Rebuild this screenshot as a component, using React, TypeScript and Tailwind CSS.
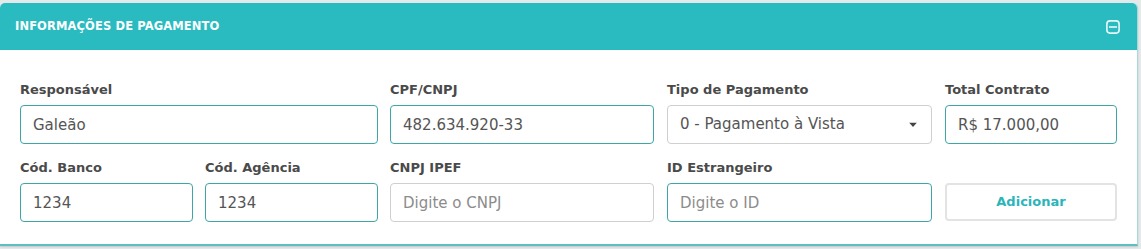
const FONT = { fontFamily: '"DejaVu Sans", "Noto Sans", sans-serif' }

function Field({ label, width, children }: { label: string; width: string; children: React.ReactNode }) {
  return (
    <div className={`flex flex-col ${width}`}>
      <label className="h-[20px] mb-[6px] flex items-center text-[13px] font-bold text-[#4a4a4a] leading-none">{label}</label>
      {children}
    </div>
  )
}

function TextInput({ value, placeholder, active }: { value?: string; placeholder?: string; active?: boolean }) {
  return (
    <input
      type="text"
      defaultValue={value}
      placeholder={placeholder}
      className={`h-[39px] w-full rounded-[4px] border bg-white px-[12px] text-[15px] text-[#555] placeholder-[#8c8c8c] outline-none ${
        active ? 'border-[#3ea6a9]' : 'border-[#cfcfcf]'
      }`}
    />
  )
}

export default function App() {
  return (
    <div className="w-[1141px] h-[249px] bg-[#e4e9e9] pt-[3px] pr-[3px]" style={FONT}>
      <div className="h-[243px] bg-white rounded-t-[5px] border-b-2 border-[#5cbfc1] border-r border-r-[#a9d8d9] shadow-[0_1px_2px_rgba(0,0,0,0.15)] flex flex-col">
        {/* header */}
        <div className="h-[47px] flex-shrink-0 bg-[#2abbc1] rounded-t-[5px] flex items-center justify-between pl-[15px] pr-[17px]">
          <h2 className="text-[11.5px] font-bold text-white uppercase tracking-[0.01em]">Informações de Pagamento</h2>
          <svg width="14" height="14" viewBox="0 0 14 14" fill="none">
            <rect x="0.9" y="0.9" width="12.2" height="12.2" rx="3" stroke="#e6f9fa" strokeWidth="1.6" />
            <line x1="3" y1="7" x2="11" y2="7" stroke="#e6f9fa" strokeWidth="1.6" />
          </svg>
        </div>

        {/* body */}
        <div className="flex flex-col gap-[13px] pt-[29px] pl-[20px]">
          <div className="flex">
            <Field label="Responsável" width="w-[358px] mr-[12px]">
              <TextInput value="Galeão" active />
            </Field>
            <Field label="CPF/CNPJ" width="w-[264px] mr-[13px]">
              <TextInput value="482.634.920-33" active />
            </Field>
            <Field label="Tipo de Pagamento" width="w-[265px] mr-[13px]">
              <div className="relative h-[39px] w-full rounded-[4px] border border-[#cfcfcf] bg-white flex items-center px-[12px] text-[15px] text-[#555]">
                0 - Pagamento à Vista
                <svg className="absolute right-[14px] top-1/2 -translate-y-1/2" width="8" height="5" viewBox="0 0 8 5">
                  <path d="M0 0 H8 L4 4.5 Z" fill="#444" />
                </svg>
              </div>
            </Field>
            <Field label="Total Contrato" width="w-[172px]">
              <TextInput value="R$ 17.000,00" active />
            </Field>
          </div>

          <div className="flex">
            <Field label="Cód. Banco" width="w-[173px] mr-[12px]">
              <TextInput value="1234" active />
            </Field>
            <Field label="Cód. Agência" width="w-[173px] mr-[12px]">
              <TextInput value="1234" active />
            </Field>
            <Field label="CNPJ IPEF" width="w-[264px] mr-[13px]">
              <TextInput placeholder="Digite o CNPJ" />
            </Field>
            <Field label="ID Estrangeiro" width="w-[265px] mr-[13px]">
              <TextInput placeholder="Digite o ID" active />
            </Field>
            <div className="flex flex-col w-[172px] pt-[26px]">
              <button className="h-[38px] w-full rounded-[4px] border-2 border-[#e3e3e3] bg-white text-[13px] font-bold text-[#2bb5bb]">
                Adicionar
              </button>
            </div>
          </div>
        </div>
      </div>
    </div>
  )
}
